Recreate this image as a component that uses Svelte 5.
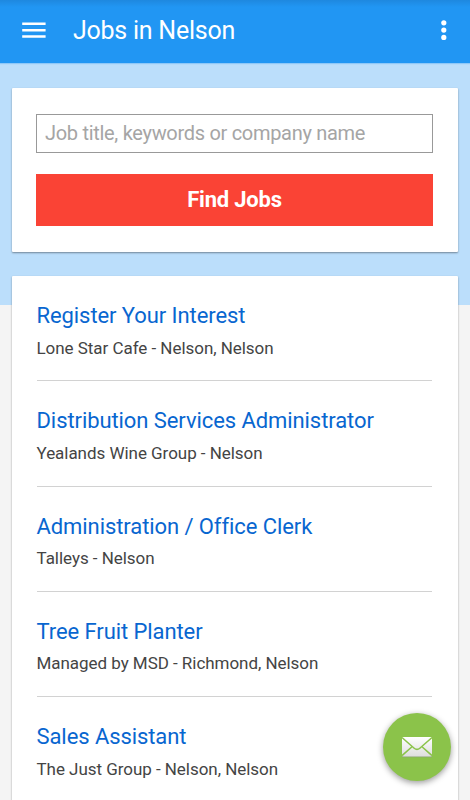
<script lang="ts">
    type Job = { title: string; company: string };

    const jobs: Job[] = [
        { title: "Register Your Interest", company: "Lone Star Cafe - Nelson, Nelson" },
        { title: "Distribution Services Administrator", company: "Yealands Wine Group - Nelson" },
        { title: "Administration / Office Clerk", company: "Talleys - Nelson" },
        { title: "Tree Fruit Planter", company: "Managed by MSD - Richmond, Nelson" },
        { title: "Sales Assistant", company: "The Just Group - Nelson, Nelson" },
    ];

    let query = $state("");
</script>

<div class="screen">
    <header>
        <button class="icon" aria-label="Menu">
            <svg width="24" height="17" viewBox="0 0 24 17">
                <path d="M.2 1.8h23.4M.2 8.2h23.4M.2 14.4h23.4" stroke="#fff" stroke-width="2.5" />
            </svg>
        </button>
        <h1>Jobs in Nelson</h1>
        <button class="icon" aria-label="More options">
            <svg width="6" height="21" viewBox="0 0 6 21" fill="#fff">
                <circle cx="2.8" cy="2.8" r="2.6" />
                <circle cx="2.8" cy="10.1" r="2.6" />
                <circle cx="2.8" cy="17.4" r="2.6" />
            </svg>
        </button>
    </header>

    <main>
        <form class="card search" onsubmit={(e) => e.preventDefault()}>
            <input
                bind:value={query}
                type="text"
                placeholder="Job title, keywords or company name"
                aria-label="Job title, keywords or company name"
            />
            <button class="submit">Find Jobs</button>
        </form>

        <ul class="card jobs">
            {#each jobs as job}
                <li>
                    <h2>{job.title}</h2>
                    <p>{job.company}</p>
                </li>
            {/each}
        </ul>
    </main>

    <button class="fab" aria-label="Email me jobs">
        <svg width="30" height="21" viewBox="0 0 30 21">
            <defs>
                <linearGradient id="paper" x1="0" y1="0" x2="0" y2="1">
                    <stop offset="0" stop-color="#fff" />
                    <stop offset="1" stop-color="#dedede" />
                </linearGradient>
            </defs>
            <rect y="19" width="30" height="1.3" fill="#8f9b80" opacity="0.7" />
            <rect width="30" height="19.4" rx="0.8" fill="url(#paper)" />
            <path
                d="M0 .6 12.2 11.2Q15 13.6 17.8 11.2L30 .6M0 18.6 10.3 9.5M30 18.6 19.7 9.5"
                fill="none"
                stroke="#8bc34a"
                stroke-width="1.5"
            />
        </svg>
    </button>
</div>

<style>
    :global(body) {
        background: #f4f4f4;
        overflow: hidden;
    }

    .screen {
        position: relative;
        display: flex;
        flex-direction: column;
        height: 800px;
        overflow: hidden;
        box-sizing: border-box;
        font-family: Roboto, "Liberation Sans", sans-serif;
        background: linear-gradient(#bbdefb 305px, #f4f4f4 305px);
    }

    button {
        border: 0;
        padding: 0;
        font-family: inherit;
        cursor: pointer;
    }

    header {
        display: flex;
        flex: none;
        align-items: center;
        height: 63px;
        padding: 0 23px 3px 22px;
        box-sizing: border-box;
        background: linear-gradient(#1e88df, #2196f3 7px);
        box-shadow: 0 1px 1px #8fc8f8;
    }

    .icon {
        display: flex;
        background: none;
    }

    h1 {
        flex: 1;
        margin: 0 0 0 27px;
        padding-top: 2px;
        font-size: 25px;
        font-weight: 400;
        line-height: 30px;
        letter-spacing: -0.24px;
        color: #fff;
    }

    main {
        display: flex;
        flex-direction: column;
        gap: 24px;
        padding: 25px 12px 0;
    }

    .card {
        border-radius: 1px;
        background: #fff;
        box-shadow: 0 1px 2px rgba(0, 0, 0, 0.4);
    }

    .search {
        display: flex;
        flex: none;
        flex-direction: column;
        gap: 21px;
        height: 164px;
        padding: 26px 25px 0 24px;
        box-sizing: border-box;
    }

    input {
        height: 39px;
        padding: 0 8px 2px;
        box-sizing: border-box;
        border: 1px solid #999;
        border-radius: 0;
        outline: none;
        background: #fff;
        font: 400 20px Roboto, "Liberation Sans", sans-serif;
        letter-spacing: -0.3px;
    }

    input::placeholder {
        color: #a5a5a5;
        opacity: 1;
    }

    .submit {
        height: 52px;
        padding-bottom: 1px;
        background: #fa4335;
        color: #fff;
        font-size: 22px;
        font-weight: 700;
        letter-spacing: -0.2px;
    }

    .jobs {
        margin: 0;
        padding: 0 26px 0 25px;
        list-style: none;
    }

    li {
        height: 105.3px;
        padding-top: 27px;
        box-sizing: border-box;
        border-bottom: 1px solid #d2d2d2;
    }

    h2 {
        margin: 0 0 0 -0.5px;
        font-size: 22px;
        font-weight: 400;
        line-height: 26px;
        letter-spacing: -0.08px;
        color: #0866d0;
    }

    p {
        margin: 8.5px 0 0 -0.5px;
        font-size: 17px;
        line-height: 20px;
        letter-spacing: -0.04px;
        color: #444;
    }

    .fab {
        position: absolute;
        right: 19px;
        bottom: 19px;
        display: flex;
        align-items: center;
        justify-content: center;
        width: 68px;
        height: 68px;
        border-radius: 50%;
        background: #8bc34a;
        box-shadow: 0 2px 6px rgba(0, 0, 0, 0.4);
    }
</style>
